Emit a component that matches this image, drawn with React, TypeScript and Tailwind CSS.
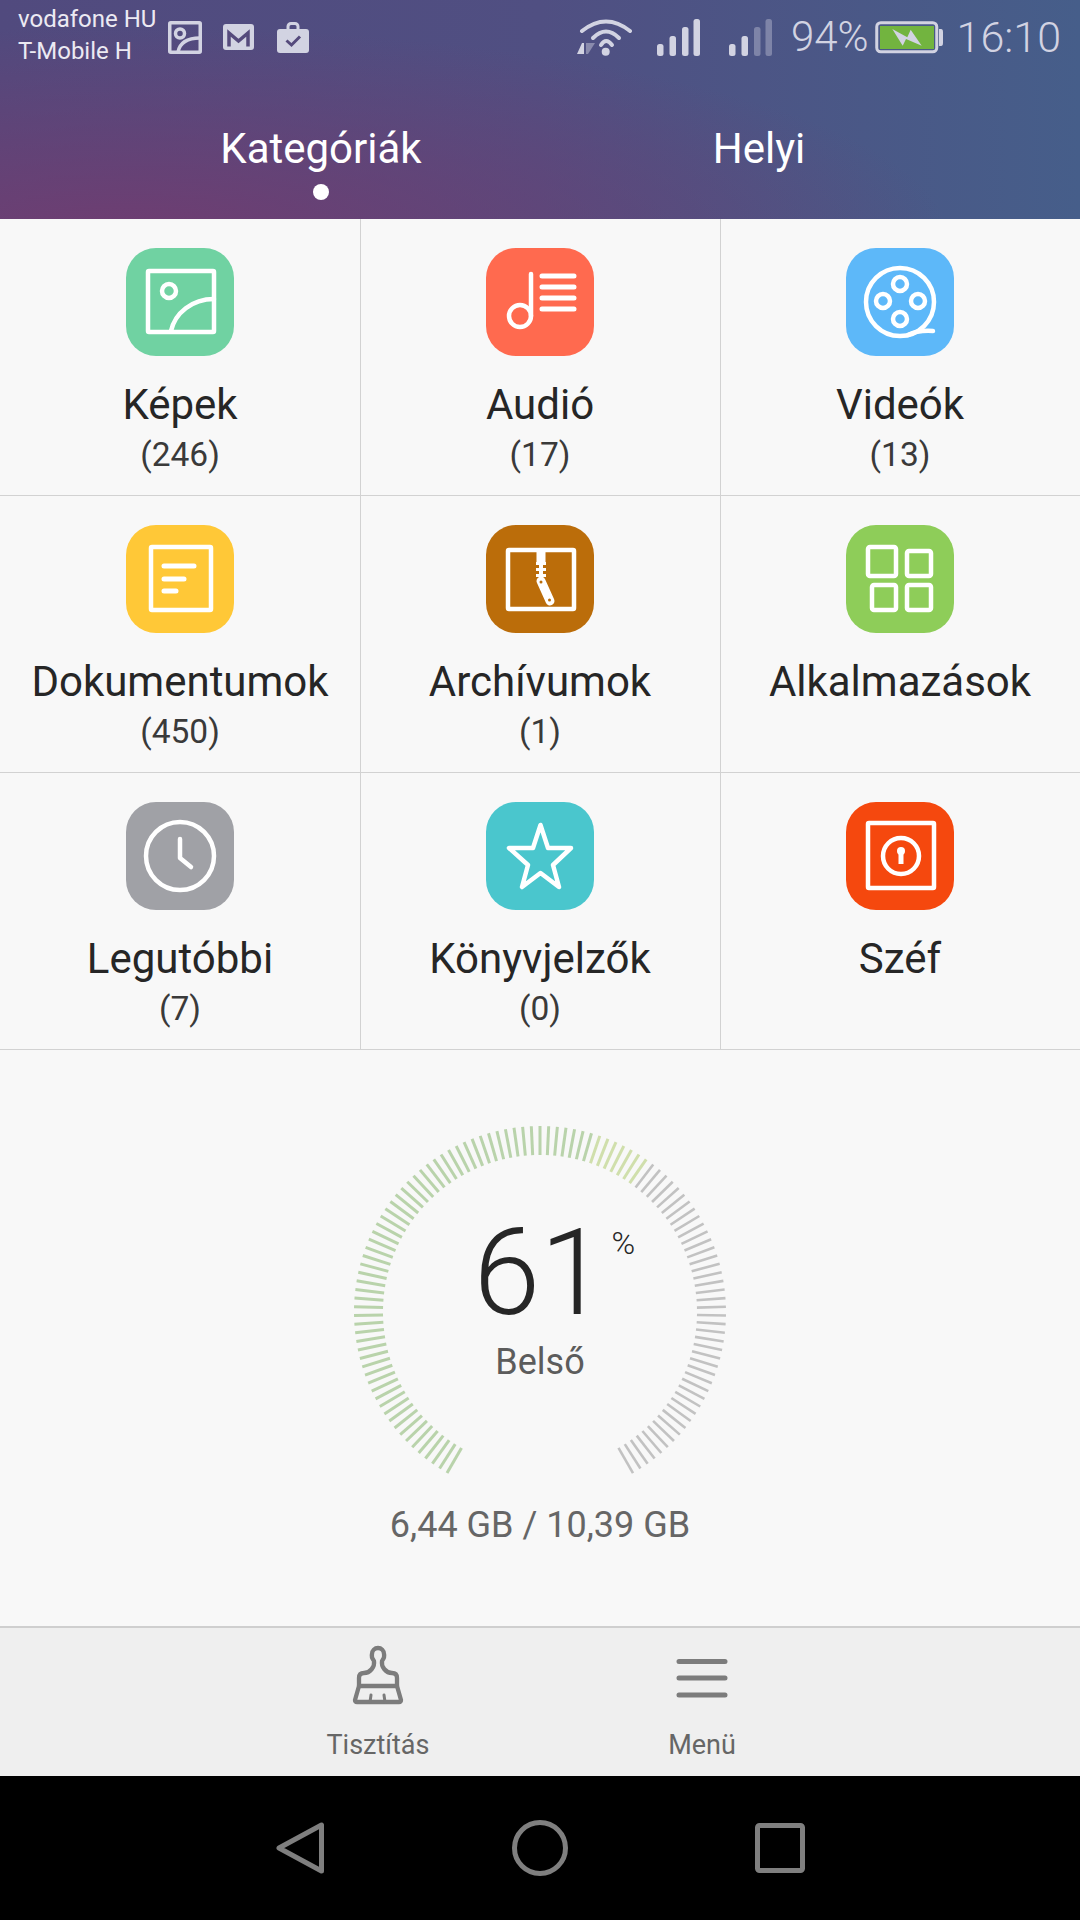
import { FC, ReactNode } from 'react';

const WHITE = {
  fill: 'none',
  stroke: '#fff',
  strokeWidth: 4.5,
  strokeLinecap: 'round',
  strokeLinejoin: 'round',
} as const;

const TileIcon: FC<{ color: string; children: ReactNode }> = ({ color, children }) => (
  <div className="w-[108px] h-[108px] rounded-[30px] overflow-hidden" style={{ backgroundColor: color }}>
    <svg width="108" height="108" viewBox="0 0 108 108">
      <g {...WHITE}>{children}</g>
    </svg>
  </div>
);

const tiles = [
  {
    label: 'Képek',
    count: '(246)',
    color: '#70d2a2',
    icon: (
      <>
        <rect x="22" y="23" width="66" height="61" rx="1" />
        <circle cx="43" cy="43" r="7" />
        <path d="M45 83 C49 65 66 51 88 51" />
      </>
    ),
  },
  {
    label: 'Audió',
    count: '(17)',
    color: '#ff6a4f',
    icon: (
      <>
        <circle cx="34" cy="68" r="11" />
        <path d="M45 68 V26" />
        <path d="M56 28 H88 M56 39 H88 M56 50 H88 M56 61 H88" strokeWidth="5" />
      </>
    ),
  },
  {
    label: 'Videók',
    count: '(13)',
    color: '#5db8f9',
    icon: (
      <>
        <circle cx="54" cy="54" r="34" />
        <circle cx="54" cy="36" r="7" />
        <circle cx="54" cy="71" r="7" />
        <circle cx="37" cy="53" r="7" />
        <circle cx="72" cy="53" r="7" />
        <path d="M62 87 Q72 82 87 83" />
      </>
    ),
  },
  {
    label: 'Dokumentumok',
    count: '(450)',
    color: '#ffc837',
    icon: (
      <>
        <rect x="25" y="22" width="60" height="63" rx="1" />
        <path d="M38 41 H68 M38 54 H58 M38 66 H50" strokeWidth="5" />
      </>
    ),
  },
  {
    label: 'Archívumok',
    count: '(1)',
    color: '#bb6d0a',
    icon: (
      <>
        <rect x="22" y="25" width="66" height="59" rx="1" />
        <path d="M55 25 V37" strokeWidth="9" strokeLinecap="butt" />
        <path d="M55 36 V54" strokeWidth="4" strokeLinecap="butt" />
        <path d="M55 37 V53" strokeWidth="10" strokeDasharray="3 3" strokeLinecap="butt" />
        <path d="M55 56 L64 76" strokeWidth="9" />
        <circle cx="55" cy="57" r="1.5" fill="#bb6d0a" stroke="none" />
        <circle cx="63.5" cy="75" r="1.5" fill="#bb6d0a" stroke="none" />
      </>
    ),
  },
  {
    label: 'Alkalmazások',
    count: '',
    color: '#8ecd59',
    icon: (
      <>
        <rect x="22" y="22" width="28" height="29" rx="2" />
        <rect x="61" y="26" width="24" height="25" rx="2" />
        <rect x="26" y="60" width="24" height="25" rx="2" />
        <rect x="61" y="60" width="24" height="25" rx="2" />
      </>
    ),
  },
  {
    label: 'Legutóbbi',
    count: '(7)',
    color: '#a0a1a6',
    icon: (
      <>
        <circle cx="54" cy="54" r="34" />
        <path d="M54 37 V56 L65 65" />
      </>
    ),
  },
  {
    label: 'Könyvjelzők',
    count: '(0)',
    color: '#4ac6cd',
    icon: <path d="M54.5 23 L62 46 H85 L67 63 L73 85 L54.5 71 L36 85 L42 63 L23 46 H47 Z" strokeWidth="4.5" />,
  },
  {
    label: 'Széf',
    count: '',
    color: '#f5480e',
    icon: (
      <>
        <rect x="22" y="21" width="66" height="65" rx="1" />
        <circle cx="55" cy="54" r="18" />
        <circle cx="55" cy="49" r="4" fill="#fff" stroke="none" />
        <path d="M55 50 V62" strokeWidth="5" strokeLinecap="butt" />
      </>
    ),
  },
];

const ticks = Array.from({ length: 113 }, (_, i) => {
  const a = ((-150 + (i * 300) / 112) * Math.PI) / 180;
  const used = i <= 69;
  return {
    x1: 186 + 157 * Math.sin(a),
    y1: 186 - 157 * Math.cos(a),
    x2: 186 + 186 * Math.sin(a),
    y2: 186 - 186 * Math.cos(a),
    stroke: used ? (i > 62 ? '#d0dfac' : '#b9d3ab') : '#c2c2c2',
    width: used ? 3 : 2.6,
  };
});

const StatusIcons: FC = () => (
  <>
    <svg width="34" height="33" viewBox="0 0 34 33" className="shrink-0">
      <g fill="none" stroke="#d2d3e2" strokeWidth="3.5">
        <rect x="1.75" y="1.75" width="30.5" height="29.5" rx="1" />
        <circle cx="12" cy="12.5" r="4.5" />
        <path d="M10 31 C12 21 21 17 32 17" />
      </g>
    </svg>
    <svg width="31" height="26" viewBox="0 0 31 26" className="ml-[21px] shrink-0">
      <rect width="31" height="26" rx="3" fill="#d2d3e2" />
      <path d="M6 22.5 V9 L15.5 17 L25 9 V22.5" fill="none" stroke="#554a7c" strokeWidth="3.5" />
    </svg>
    <svg width="32" height="31" viewBox="0 0 32 31" className="ml-[23px] shrink-0">
      <rect x="11" y="1.5" width="10" height="10" rx="3" fill="none" stroke="#d2d3e2" strokeWidth="3" />
      <rect y="7" width="32" height="24" rx="3" fill="#d2d3e2" />
      <path d="M9.5 18.5 L14.5 23 L23 14.5" fill="none" stroke="#554a7c" strokeWidth="3" />
    </svg>
  </>
);

const Signal: FC<{ bars: number }> = ({ bars }) => (
  <svg width="43" height="37" viewBox="0 0 43 37" className="shrink-0">
    {[
      [0, 25, 12],
      [12.5, 17, 20],
      [25, 8, 29],
      [36.5, 0, 37],
    ].map(([x, y, h], i) => (
      <rect key={x} x={x} y={y} width="6.5" height={h} rx="2.5" fill={i < bars ? '#d2d3e2' : '#7e84a8'} />
    ))}
  </svg>
);

const Wifi: FC = () => (
  <svg width="60" height="45" viewBox="0 0 60 45" className="shrink-0">
    <g fill="none" stroke="#d2d3e2" strokeWidth="4" strokeLinecap="round">
      <path d="M8 16 Q32 -3 56 16" />
      <path d="M19 23 Q32 10 45 23" />
      <path d="M27 30 Q32 22 38 30" />
    </g>
    <circle cx="31.7" cy="36.7" r="4" fill="#d2d3e2" />
    <path d="M3 39 L8 28 H10 V39 Z" fill="#d2d3e2" />
    <path d="M12 28 H21 L14 39 H12 Z" fill="#8a8bad" />
  </svg>
);

const Battery: FC = () => (
  <svg width="68" height="33" viewBox="0 0 68 33" className="shrink-0">
    <rect x="1.75" y="1.75" width="60" height="29" rx="4" fill="none" stroke="#d2d3e2" strokeWidth="3" />
    <rect x="5" y="5" width="54" height="23" fill="#72b43f" />
    <path d="M64 8 H66 Q68 8 68 11 V22 Q68 25 66 25 H64 Z" fill="#d2d3e2" />
    <path d="M17.3 8 L32.3 16.3 L35.7 8.7 L46.7 24.7 L31 18 L27.7 24.7 Z" fill="#d2d3e2" />
  </svg>
);

const App: FC = () => {
  return (
    <div className="w-[1080px] h-[1920px] flex flex-col bg-[#f8f8f8] font-['Roboto',sans-serif] overflow-hidden">
      <header className="h-[219px] shrink-0 bg-[radial-gradient(ellipse_820px_210px_at_12%_108%,#6f3d71_0%,#6f3d7100_100%),linear-gradient(90deg,#514a7e_0%,#504f82_50%,#465e8a_100%)]">
        <div className="h-[74px] flex items-center pl-[18px] pr-[19px]">
          <div className="w-[150px] mb-[5px] text-[24px] leading-[32px] text-[#eceaf3]">
            <p>vodafone HU</p>
            <p>T-Mobile H</p>
          </div>
          <StatusIcons />
          <div className="ml-auto flex items-center">
            <Wifi />
            <div className="ml-[23px]">
              <Signal bars={4} />
            </div>
            <div className="ml-[29px]">
              <Signal bars={2} />
            </div>
            <span className="ml-[19px] mr-[6px] text-[42px] leading-[44px] font-light text-[#d2d3e2]">94%</span>
            <Battery />
            <span className="ml-[14px] text-[43px] leading-[44px] font-light text-[#d2d3e2]">16:10</span>
          </div>
        </div>
        <div className="grid grid-cols-2 px-[102px] pt-[49px] text-center text-white text-[42px] leading-[52px]">
          <div className="flex flex-col items-center">
            <span>Kategóriák</span>
            <span className="mt-[9px] w-[16px] h-[16px] rounded-full bg-white" />
          </div>
          <div>Helyi</div>
        </div>
      </header>

      <div className="grid grid-cols-3 shrink-0">
        {tiles.map((t, i) => (
          <div
            key={t.label}
            className={`h-[277px] pt-[29px] flex flex-col items-center border-b border-[#d2d2d2] ${
              i % 3 !== 0 ? 'border-l pr-px' : ''
            }`}
          >
            <TileIcon color={t.color}>{t.icon}</TileIcon>
            <div className="mt-[25px] text-[42px] leading-[48px] text-[#262626]">{t.label}</div>
            {t.count && <div className="mt-[6px] text-[33.5px] leading-[40px] text-[#3a3a3a]">{t.count}</div>}
          </div>
        ))}
      </div>

      <section className="flex-1 flex flex-col items-center pt-[76px]">
        <div className="relative w-[372px] h-[372px]">
          <svg width="372" height="372" viewBox="0 0 372 372" className="absolute inset-0 blur-[0.4px]">
            {ticks.map((t, i) => (
              <line key={i} x1={t.x1} y1={t.y1} x2={t.x2} y2={t.y2} stroke={t.stroke} strokeWidth={t.width} />
            ))}
          </svg>
          <div className="relative flex flex-col items-center pt-[87px]">
            <div className="relative text-[120px] leading-[120px] font-light text-[#262626]">
              61
              <span className="absolute left-full top-[12px] ml-[5px] text-[32px] leading-[36px] font-light">%</span>
            </div>
            <div className="mt-[7px] text-[36px] leading-[44px] text-[#5c5c5c]">Belső</div>
          </div>
        </div>
        <p className="mt-[7px] text-[36px] leading-[40px] text-[#666]">6,44 GB / 10,39 GB</p>
      </section>

      <nav className="h-[150px] shrink-0 grid grid-cols-2 px-[216px] bg-[#efefef] border-t-2 border-[#cfcfcf] text-[27px] text-[#666]">
        <div className="flex flex-col items-center">
          <svg width="80" height="75" viewBox="0 0 80 75" className="mt-[12px]">
            <g transform="translate(1 0)" fill="none" stroke="#7c7c7c" strokeWidth="4.3" strokeLinejoin="round" strokeLinecap="round">
              <path d="M20 46 V38 Q20 33 25 33 C31 33 36 27 35 21 Q32 17 33 14 A6 6 0 0 1 45 14 Q46 17 43 21 C42 27 47 33 53 33 Q58 33 58 38 V46 Z" />
              <path d="M20 46 L16 60 Q16 62 18 62 H60 Q62 62 62 60 L58 46" />
              <path d="M32 55 L31 62 M45 55 L46 62" strokeWidth="3" />
            </g>
          </svg>
          <span className="mt-[14px] leading-[32px]">Tisztítás</span>
        </div>
        <div className="flex flex-col items-center">
          <svg width="80" height="75" viewBox="0 0 80 75" className="mt-[12px]">
            <path d="M17 21.5 H63 M17 38 H63 M17 55 H63" fill="none" stroke="#7c7c7c" strokeWidth="5" strokeLinecap="round" />
          </svg>
          <span className="mt-[14px] leading-[32px]">Menü</span>
        </div>
      </nav>

      <div className="h-[144px] shrink-0 grid grid-cols-3 px-[180px] items-center justify-items-center bg-black">
        <svg width="60" height="60" viewBox="0 0 60 60">
          <path d="M9 30 L51.5 7 V53 Z" fill="none" stroke="#7f7f7f" strokeWidth="5" strokeLinejoin="round" />
        </svg>
        <svg width="60" height="60" viewBox="0 0 60 60">
          <circle cx="30" cy="30" r="25.5" fill="none" stroke="#7f7f7f" strokeWidth="5" />
        </svg>
        <svg width="60" height="60" viewBox="0 0 60 60">
          <rect x="7.5" y="7.5" width="45" height="45" rx="2" fill="none" stroke="#7f7f7f" strokeWidth="5" />
        </svg>
      </div>
    </div>
  );
};

export default App;
